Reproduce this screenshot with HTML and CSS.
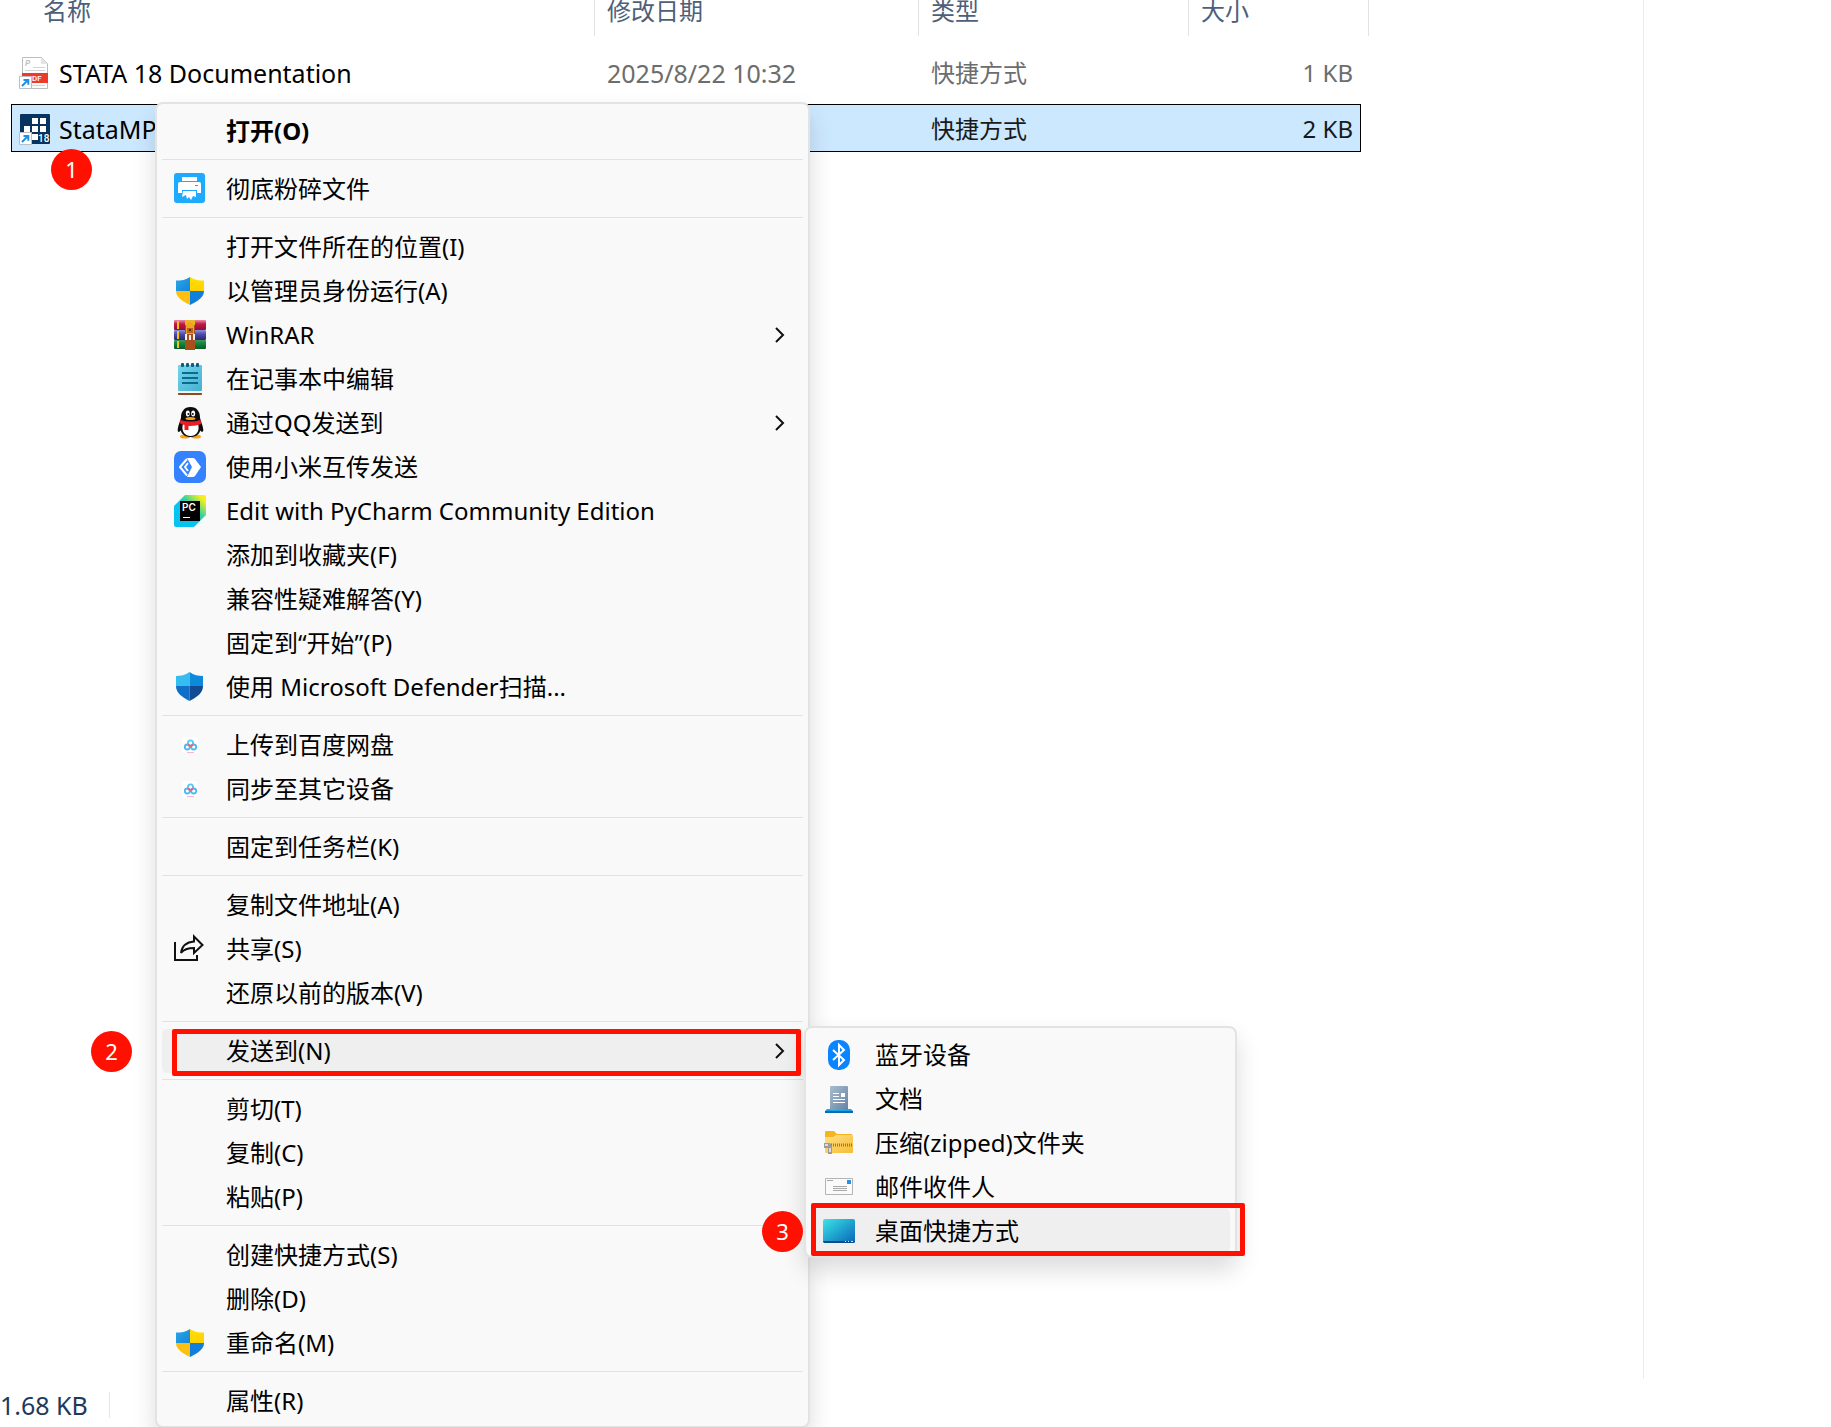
FILE: index.html
```html
<!DOCTYPE html>
<html lang="zh-CN">
<head>
<meta charset="utf-8">
<title>Stata 18</title>
<link rel="stylesheet" href="styles.css">
</head>
<body>
<svg class="defs" aria-hidden="true">
  <defs>
    <linearGradient id="sb" x1="0" y1="0" x2="1" y2="1"><stop offset="0" stop-color="#2aa9ea"/><stop offset="1" stop-color="#1484d8"/></linearGradient>
    <linearGradient id="sy" x1="0" y1="0" x2="0" y2="1"><stop offset="0" stop-color="#ffe000"/><stop offset="1" stop-color="#ffd000"/></linearGradient>
    <linearGradient id="wr" x1="0" y1="0" x2="0" y2="1"><stop offset="0" stop-color="#f08aa8"/><stop offset=".4" stop-color="#c01a45"/><stop offset="1" stop-color="#8d0f32"/></linearGradient>
    <linearGradient id="wb" x1="0" y1="0" x2="0" y2="1"><stop offset="0" stop-color="#8f8fd6"/><stop offset=".4" stop-color="#4f4db0"/><stop offset="1" stop-color="#2a2866"/></linearGradient>
    <linearGradient id="wg" x1="0" y1="0" x2="0" y2="1"><stop offset="0" stop-color="#3f9a5d"/><stop offset=".4" stop-color="#12853c"/><stop offset="1" stop-color="#075a27"/></linearGradient>
    <linearGradient id="np" x1="0" y1="0" x2="1" y2="1"><stop offset="0" stop-color="#74d6ec"/><stop offset="1" stop-color="#45b0d0"/></linearGradient>
    <linearGradient id="pc" x1="0" y1="1" x2="1" y2="0"><stop offset=".45" stop-color="#07c3f2"/><stop offset=".62" stop-color="#3ad39b"/><stop offset=".88" stop-color="#f4ee1b"/></linearGradient>
    <linearGradient id="dc" x1="0" y1="0" x2="1" y2="1"><stop offset="0" stop-color="#a9bdd0"/><stop offset="1" stop-color="#6483a5"/></linearGradient>
    <linearGradient id="fd" x1="0" y1="0" x2="1" y2="1"><stop offset="0" stop-color="#ffe08a"/><stop offset="1" stop-color="#f5bd33"/></linearGradient>
    <linearGradient id="dk" x1="0" y1="0" x2="1" y2="1"><stop offset="0" stop-color="#3fe3e8"/><stop offset=".5" stop-color="#1fa5cf"/><stop offset="1" stop-color="#0f63b8"/></linearGradient>
    <symbol id="i-shield" viewBox="0 0 32 32">
      <path fill="url(#sb)" d="M16 2C12 5 7 5.500 2 5.500V16h14z"/>
      <path fill="url(#sy)" d="M16 2c4 3 9 3.500 14 3.500V16H16z"/>
      <path fill="#fdc010" d="M2 16h14v14C8 26 2 22 2 16z"/>
      <path fill="#0f7fdb" d="M30 16H16v14c8-4 14-8 14-14z"/>
    </symbol>
    <symbol id="i-shred" viewBox="0 0 32 32">
      <rect width="31" height="30" rx="3" fill="#1eaaff"/>
      <rect x="8" y="4" width="15" height="4" fill="#fff"/>
      <path fill="#fff" d="M6 9h19q2 0 2 2v9h-4v-3H8v3H4v-9q0-2 2-2z"/>
      <rect x="21" y="12" width="3" height="1" fill="#1eaaff"/>
      <path fill="#fff" d="M9 18h13v6l-3-1-2 4-2-3-2 2-1-4-4 2z"/>
    </symbol>
    <symbol id="i-rar" viewBox="0 0 32 32">
      <rect y="1" width="32" height="10" rx="1" fill="url(#wr)"/>
      <rect y="11" width="32" height="10" rx="1" fill="url(#wb)"/>
      <rect y="21" width="32" height="9" rx="1" fill="url(#wg)"/>
      <path fill="#f2c21b" d="M3 2h2v8H3zM3 12h2v8H3zM3 22h2v7H3z"/>
      <rect x="11" y="1" width="10" height="30" fill="#a8501c"/>
      <path fill="#e8b62a" d="M11 1h10v5H11z"/>
      <path fill="#f3a21e" d="M12 6q4-6 8 0v9h-8z"/>
      <path fill="#b5651d" d="M13 9h6v5h-6z"/>
      <path fill="#5c2a0c" d="M15 10h2v2h-2z"/>
      <path fill="none" stroke="#eee" stroke-width="2" d="M12 15v6M20 15v6M16 16v5"/>
    </symbol>
    <symbol id="i-note" viewBox="0 0 32 32">
      <rect x="4" y="28" width="24" height="4" rx="1" fill="#8a4b20"/>
      <rect x="4" y="26" width="24" height="4" fill="#f4f4f4"/>
      <rect x="4" y="2" width="24" height="26" rx="1" fill="url(#np)"/>
      <path stroke="#0b6a8f" stroke-width="2" d="M8 10h16M8 15h16M8 20h16"/>
      <g fill="#0b5e80"><rect x="7" width="3" height="4" rx="1"/><rect x="12" width="3" height="4" rx="1"/><rect x="17" width="3" height="4" rx="1"/><rect x="22" width="3" height="4" rx="1"/></g>
    </symbol>
    <symbol id="i-qq" viewBox="0 0 32 32">
      <ellipse cx="11" cy="29.500" rx="5" ry="2" fill="#f9a11b"/><ellipse cx="22" cy="29.500" rx="5" ry="2" fill="#f9a11b"/>
      <path fill="#0c0c0c" d="M16.500 0C10 0 7 5 7 10c0 3-3 8-3.300 13 0 3 2 2 3 .500C8 28 12 30 16.500 30S25 28 26.300 23.500c1 1.500 3 2 3-.500C29 18 26 13 26 10c0-5-3-10-9.500-10z"/>
      <path fill="#fff" d="M9 17h15c2 6-1 12-7.500 12S7 23 9 17z"/>
      <ellipse cx="13.800" cy="6.500" rx="2" ry="3" fill="#fff"/><ellipse cx="19.200" cy="6.500" rx="2" ry="3" fill="#fff"/>
      <circle cx="14.400" cy="7" r="1" fill="#111"/><circle cx="18.800" cy="7" r="1" fill="#111"/>
      <ellipse cx="16.500" cy="11.500" rx="5" ry="1.600" fill="#f9a11b"/>
      <path fill="#ec1c24" d="M6.500 13q10 3 20 0l1 4q-7 2.500-13 2v4h-4v-5q-3-.500-5-2z"/>
    </symbol>
    <symbol id="i-mi" viewBox="0 0 32 32">
      <rect width="32" height="32" rx="7" fill="#3482ff"/>
      <path fill="#fff" d="M13 7h6q1 0 2 1l6 8-6 9q-1 1-2 1h-6l5-10z"/>
      <path fill="none" stroke="#fff" stroke-width="2" stroke-linejoin="round" d="M13 8L6 16l7 8.500M14 12l-3 4 3 4"/>
    </symbol>
    <symbol id="i-pycharm" viewBox="0 0 32 32">
      <path fill="url(#pc)" d="M11 0h19q2 0 2 2v18L21 31q-1 1-2 1H2q-2 0-2-2V11z"/>
      <rect x="6" y="6" width="20" height="20" fill="#000"/>
      <path fill="#fff" d="M9 22h7v1H9z"/>
      <text x="8" y="16" font-family="Inter, sans-serif" font-size="10" font-weight="600" fill="#fff">PC</text>
    </symbol>
    <symbol id="i-defender" viewBox="0 0 32 32">
      <path fill="#35bdf0" d="M15.500 1C11 4 7 5 2 5v10h13.500z"/>
      <path fill="#0f8adb" d="M15.500 1C20 4 24 5 29 5v10H15.500z"/>
      <path fill="#0f6fc6" d="M2 15h13.500v15C8 26 2 22 2 15z"/>
      <path fill="#124a94" d="M29 15H15.500v15C23 26 29 22 29 15z"/>
    </symbol>
    <symbol id="i-baidu" viewBox="0 0 32 32">
      <rect x="8" y="8" width="16" height="16" rx="3" fill="#fff"/>
      <g fill="none" stroke-width="1.800"><circle cx="16.500" cy="14" r="2.600" stroke="#5cc6f5"/><circle cx="13.300" cy="18" r="2.500" stroke="#4cb9f4"/><circle cx="19.700" cy="18" r="2.500" stroke="#4cb9f4"/><path stroke="#ee6478" d="M14 15.500l2.500 2 2.500-2"/></g>
      <path fill="#f6b9cb" d="M13 23h7v1h-7z"/>
    </symbol>
    <symbol id="i-share" viewBox="0 0 32 32">
      <g fill="none" stroke="#111" stroke-width="2"><path d="M1 9v18h22v-5"/><path d="M20 3.500L28.500 12 20 20v-5c-6 0-10 1-13 5 1-7 6-11 13-11.500z"/></g>
    </symbol>
    <symbol id="i-bt" viewBox="0 0 32 32">
      <rect x="5" y="1" width="22" height="30" rx="10" fill="#0a84ff"/>
      <path fill="none" stroke="#fff" stroke-width="2" d="M10 11l11 10-5 5V6l5 5-11 10"/>
    </symbol>
    <symbol id="i-doc" viewBox="0 0 32 32">
      <path fill="#18a7e6" d="M4 26h24l2 2v2H2v-2z"/><path fill="#0a67b3" d="M2 28h28v2H2z"/>
      <rect x="7" y="3" width="18" height="24" rx="1" fill="url(#dc)"/>
      <path fill="#fff" d="M18 10h4v4h-4zM10 10h6v1h-6zM10 13h6v1h-6zM10 16h12v1H10zM10 19h12v1H10z"/>
    </symbol>
    <symbol id="i-zip" viewBox="0 0 32 32">
      <path fill="#f6b51f" d="M2 5q0-1 1-1h8l3 3h15v6H2z"/>
      <rect x="2" y="8" width="28" height="18" rx="1" fill="url(#fd)"/>
      <path fill="#f6b51f" d="M2 8h11l-3 2H2z"/>
      <path stroke="#7b7b7b" stroke-width="3" stroke-dasharray="1 1" d="M8 18h22"/>
      <path fill="#9c9c9c" d="M1 16h6l2 3v8H5v-6H1z"/><path fill="#ddd" d="M2 17h3v2H2zM6 21h2v4H6z"/>
    </symbol>
    <symbol id="i-mail" viewBox="0 0 32 32">
      <path fill="#fafafa" stroke="#b5b5b5" d="M2.500 7.500h27v16h-27z"/>
      <rect x="24" y="9" width="4" height="4" fill="#2f8fe6"/>
      <path fill="#a8a8a8" d="M4 9h6v1H4zM10 15h14v1H10zM10 17h14v1H10zM10 19h14v1H10z"/>
    </symbol>
    <symbol id="i-desk" viewBox="0 0 32 32">
      <rect y="4" width="32" height="24" rx="2" fill="url(#dk)"/>
      <path fill="#0b4d86" d="M0 26h32q0 2-2 2H2q-2 0-2-2z"/>
      <path fill="#cfe9fa" d="M22 26h1v1h-1zM25 26h1v1h-1zM28 26h2v1h-2z"/>
    </symbol>
    <symbol id="i-link" viewBox="0 0 13 13">
      <path fill="#fff" stroke="#b9c0c8" d="M.5.5h12v12H.5z"/>
      <path fill="none" stroke="#1f8fe5" stroke-width="2" d="M3 10l6-6M4.500 4H9.300V8.800"/>
    </symbol>
    <symbol id="i-pdf" viewBox="0 0 32 32">
      <path fill="#fff" stroke="#bdbdbd" d="M3.500.5h19l6 6v25h-25z"/>
      <path fill="#e4e4e4" d="M22 0v7h7z"/>
      <path fill="#d4d4d4" d="M14 10h12v1H14zM6 13h20v1H6zM6 28h20v1H6z"/>
      <text x="6" y="9" font-family="Inter, sans-serif" font-size="8" font-style="italic" font-weight="700" fill="#c4c4c4">P</text>
      <rect x="3" y="16" width="26" height="10" fill="#ee3a2c"/>
      <text x="8" y="24" font-family="Roboto, sans-serif" font-size="8" font-weight="500" fill="#fff">PDF</text>
      <use href="#i-link" y="19" width="13" height="13"/>
    </symbol>
    <symbol id="i-stata" viewBox="0 0 32 32">
      <rect x="1" y="1" width="30" height="30" rx="1" fill="#06345e"/>
      <path fill="#fff" d="M13 5h6v6h-6zM21 5h6v6h-6zM5 13h6v6H5zM13 13h6v6h-6zM21 13h6v6h-6zM13 21h6v6h-6z"/>
      <text x="19" y="29" font-family="Roboto, sans-serif" font-size="10" font-weight="500" fill="#fff">18</text>
      <use href="#i-link" y="19" width="13" height="13"/>
    </symbol>
    <symbol id="i-more" viewBox="0 0 12 16"><path fill="none" stroke="#111" stroke-width="2" d="M3 1l7 7-7 7"/></symbol>
  </defs>
</svg>

<main class="explorer">
  <div class="content">
    <div class="files">
      <table class="list">
        <colgroup><col class="c-name"><col class="c-date"><col class="c-type"><col class="c-size"></colgroup>
        <thead><tr><th class="name">名称</th><th>修改日期</th><th>类型</th><th class="last">大小</th></tr></thead>
        <tbody>
          <tr><td class="name"><span class="file"><svg class="icon"><use href="#i-pdf"/></svg>STATA 18 Documentation</span></td><td class="date">2025/8/22 10:32</td><td>快捷方式</td><td class="size">1 KB</td></tr>
          <tr class="selected"><td class="name"><span class="file"><svg class="icon"><use href="#i-stata"/></svg>StataMP</span></td><td class="date"></td><td>快捷方式</td><td class="size">2 KB</td></tr>
        </tbody>
      </table>
    </div>
    <aside class="preview"></aside>
  </div>
  <footer class="status"><span>1.68 KB</span></footer>

  <div class="menu context" role="menu">
    <button class="item default" role="menuitem"><span class="slot"></span>打开(O)</button>
    <hr>
    <button class="item" role="menuitem"><svg class="icon"><use href="#i-shred"/></svg>彻底粉碎文件</button>
    <hr>
    <button class="item" role="menuitem"><span class="slot"></span>打开文件所在的位置(I)</button>
    <button class="item" role="menuitem"><svg class="icon"><use href="#i-shield"/></svg>以管理员身份运行(A)</button>
    <button class="item" role="menuitem"><svg class="icon"><use href="#i-rar"/></svg>WinRAR<svg class="more"><use href="#i-more"/></svg></button>
    <button class="item" role="menuitem"><svg class="icon"><use href="#i-note"/></svg>在记事本中编辑</button>
    <button class="item" role="menuitem"><svg class="icon"><use href="#i-qq"/></svg>通过QQ发送到<svg class="more"><use href="#i-more"/></svg></button>
    <button class="item" role="menuitem"><svg class="icon"><use href="#i-mi"/></svg>使用小米互传发送</button>
    <button class="item" role="menuitem"><svg class="icon"><use href="#i-pycharm"/></svg>Edit with PyCharm Community Edition</button>
    <button class="item" role="menuitem"><span class="slot"></span>添加到收藏夹(F)</button>
    <button class="item" role="menuitem"><span class="slot"></span>兼容性疑难解答(Y)</button>
    <button class="item" role="menuitem"><span class="slot"></span>固定到“开始”(P)</button>
    <button class="item" role="menuitem"><svg class="icon"><use href="#i-defender"/></svg>使用 Microsoft Defender扫描...</button>
    <hr>
    <button class="item" role="menuitem"><svg class="icon"><use href="#i-baidu"/></svg>上传到百度网盘</button>
    <button class="item" role="menuitem"><svg class="icon"><use href="#i-baidu"/></svg>同步至其它设备</button>
    <hr>
    <button class="item" role="menuitem"><span class="slot"></span>固定到任务栏(K)</button>
    <hr>
    <button class="item" role="menuitem"><span class="slot"></span>复制文件地址(A)</button>
    <button class="item" role="menuitem"><svg class="icon"><use href="#i-share"/></svg>共享(S)</button>
    <button class="item" role="menuitem"><span class="slot"></span>还原以前的版本(V)</button>
    <hr>
    <button class="item active" role="menuitem"><span class="slot"></span>发送到(N)<svg class="more"><use href="#i-more"/></svg></button>
    <hr>
    <button class="item" role="menuitem"><span class="slot"></span>剪切(T)</button>
    <button class="item" role="menuitem"><span class="slot"></span>复制(C)</button>
    <button class="item" role="menuitem"><span class="slot"></span>粘贴(P)</button>
    <hr>
    <button class="item" role="menuitem"><span class="slot"></span>创建快捷方式(S)</button>
    <button class="item" role="menuitem"><span class="slot"></span>删除(D)</button>
    <button class="item" role="menuitem"><svg class="icon"><use href="#i-shield"/></svg>重命名(M)</button>
    <hr>
    <button class="item" role="menuitem"><span class="slot"></span>属性(R)</button>
  </div>

  <div class="menu submenu" role="menu">
    <button class="item" role="menuitem"><svg class="icon"><use href="#i-bt"/></svg>蓝牙设备</button>
    <button class="item" role="menuitem"><svg class="icon"><use href="#i-doc"/></svg>文档</button>
    <button class="item" role="menuitem"><svg class="icon"><use href="#i-zip"/></svg>压缩(zipped)文件夹</button>
    <button class="item" role="menuitem"><svg class="icon"><use href="#i-mail"/></svg>邮件收件人</button>
    <button class="item active" role="menuitem"><svg class="icon"><use href="#i-desk"/></svg>桌面快捷方式</button>
  </div>

  <div class="frame frame-send"></div>
  <div class="frame frame-desktop"></div>
  <span class="step step-1">1</span>
  <span class="step step-2">2</span>
  <span class="step step-3">3</span>
</main>
</body>
</html>
```
FILE: styles.css
```css
* { box-sizing: border-box; }

body {
  margin: 0;
  background: #fff;
  color: #000;
  font: 24px/32px "Noto Sans", "Noto Sans CJK SC", sans-serif;
}

.defs { position: absolute; width: 0; height: 0; }

.explorer {
  position: relative;
  display: flex;
  flex-direction: column;
  min-height: 100vh;
  overflow: hidden;
}

.content { flex: 1; display: flex; }
.files { flex: 1; padding-left: 11px; }
.preview { width: 188px; border-left: 1px solid #ececec; }

/* File list */
.list { width: 1350px; table-layout: fixed; border-spacing: 0; }
.c-name { width: 583px; }
.c-date { width: 324px; }
.c-type { width: 270px; }

.list th {
  position: relative;
  height: 48px;
  padding: 0 13px 26px;
  line-height: 22px;
  text-align: left;
  font-weight: 400;
  color: #4c607a;
}
.list th.name { padding-left: 32px; }
.list th + th::before,
.list th.last::after {
  content: "";
  position: absolute;
  top: 0;
  left: 0;
  height: 36px;
  border-left: 1px solid #e2e2e2;
}
.list th.last::after { left: auto; right: -8px; }

.list td { height: 56px; padding: 2px 13px 8px; color: #6d6d6d; }
.list td.name { padding-left: 8px; font-size: 25px; color: #000; }
.list td.date { font-size: 25px; }
.list td.size { padding-right: 8px; text-align: right; }
.file { display: flex; align-items: center; gap: 8px; }

.list .selected { outline: 1px solid #000; outline-offset: -1px; }
.list .selected td { height: 48px; padding-bottom: 0; background: #cce8ff; color: #1a1a1a; }
.list .selected td.name { color: #000; }

.icon { width: 32px; height: 32px; flex: none; }

/* Status bar */
.status { display: flex; align-items: center; height: 48px; padding-top: 4px; color: #1e395b; font-size: 25px; }
.status span { width: 110px; line-height: 26px; border-right: 1px solid #e6e6e6; }

/* Menus */
.menu {
  position: absolute;
  padding: 5px 5px 3px;
  background: #f9f9f9;
  border: 2px solid #e3e3e3;
  border-radius: 8px;
  box-shadow: 0 12px 24px rgba(0, 0, 0, .14);
}
.context { left: 155px; top: 102px; width: 655px; }
.submenu { left: 804px; top: 1026px; width: 433px; }

.menu hr { margin: 6px 0 7px; border: 0; border-top: 1px solid #e2e2e2; }

.item {
  display: flex;
  align-items: center;
  gap: 20px;
  width: 100%;
  height: 44px;
  padding: 0 18px 0 12px;
  border: 0;
  border-radius: 5px;
  background: none;
  color: #000;
  font: inherit;
  text-align: left;
}
.item.default { font-weight: 700; }
.item.active { background: #efefef; }
.slot { width: 32px; }
.more { width: 12px; height: 16px; margin-left: auto; }

/* Step annotations */
.frame { position: absolute; border: 5px solid #ff1000; border-radius: 2px; }
.frame-send { left: 172px; top: 1029px; width: 629px; height: 47px; }
.frame-desktop { left: 811px; top: 1203px; width: 434px; height: 53px; }

.step {
  position: absolute;
  width: 41px;
  height: 41px;
  border-radius: 50%;
  background: #ff1000;
  color: #fff;
  font-size: 22px;
  line-height: 41px;
  text-align: center;
}
.step-1 { left: 51px; top: 149px; }
.step-2 { left: 91px; top: 1031px; }
.step-3 { left: 762px; top: 1211px; }
```
